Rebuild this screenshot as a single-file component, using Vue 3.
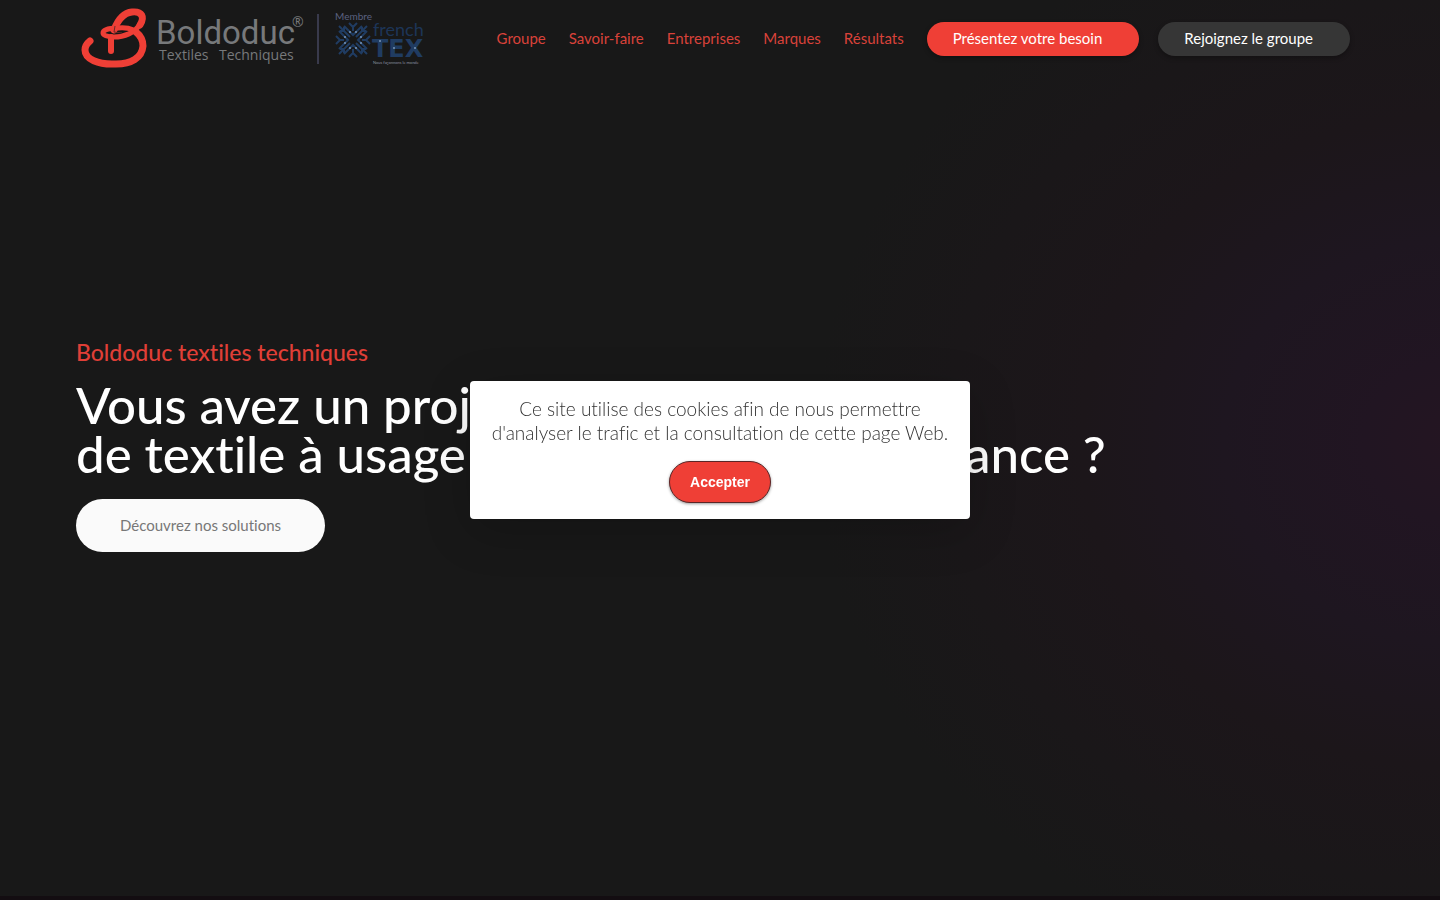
<template>
  <div class="page">
    <header class="header">
      <a class="brand" href="#" aria-label="Boldoduc Textiles Techniques">
        <svg class="logo" viewBox="0 0 360 78" width="360" height="78">
          <g fill="none" stroke="#ef3f36" stroke-linecap="round" stroke-linejoin="round">
            <path stroke-width="6" d="M35 51V37" />
            <path stroke-width="7" d="M38 30C41 22 46 13 56 12C66 11 69 17 64 25" />
            <path stroke-width="5" d="M64 24C59 33 48 37 38 37C31 37 27 35 27 33C27 30 33 28 42 28C52 27 60 30 64 36" />
            <path stroke-width="7" d="M60 32C65 36 67 41 67 46C66 58 55 64 40 64C22 65 9 59 9 50Q9 45 14 41" />
          </g>
          <path d="M39 26L38 32L46 33" fill="none" stroke="#6e2826" stroke-width="1" />
          <g class="logo-name">
            <text class="logo-title" x="80" y="44" font-size="33">Boldoduc</text>
            <text x="83" y="60" font-size="14">Textiles</text>
            <text x="143" y="60" font-size="14">Techniques</text>
            <text x="216" y="27" font-size="14">®</text>
          </g>
          <path d="M242 14V64" stroke="#5b5d80" />
          <g class="logo-member">
            <text x="259" y="20" font-size="10" fill="#5a6180">Membre</text>
            <text x="297" y="36" font-size="18" fill="#1d3557">french</text>
            <text class="logo-tex" x="296" y="57" font-size="24" fill="#203c62">TEX</text>
            <text x="297" y="64" font-size="4" fill="#8a92a0">Nous façonnons le monde</text>
          </g>
          <g fill="none" stroke="#203c62" stroke-width="2">
            <path v-for="angle in angles" :key="angle" :transform="`rotate(${angle} 277 40)`" d="M273 23L277 27L281 23M268 26L277 35L286 26M277 27V31M280 37L291 26M286 27V31H290" />
          </g>
          <g fill="#7896b8">
            <circle v-for="dot in dots" :key="dot.join()" :cx="dot[0]" :cy="dot[1]" r="1" />
          </g>
        </svg>
      </a>
      <nav class="nav">
        <a v-for="link in links" :key="link" class="nav-link" href="#">{{ link }}</a>
        <a class="pill pill-red" href="#">Présentez votre besoin</a>
        <a class="pill pill-grey" href="#">Rejoignez le groupe</a>
      </nav>
    </header>

    <main class="hero">
      <p class="subtitle">Boldoduc textiles techniques</p>
      <h1 class="title">Vous avez un projet<br>de textile à usage technique de performance ?</h1>
      <a class="discover" href="#">Découvrez nos solutions</a>
    </main>
    <div class="next-section"></div>

    <div v-if="cookiesOpen" class="overlay">
      <div class="cookies" role="dialog" aria-label="Cookies">
        <p class="cookies-text">Ce site utilise des cookies afin de nous permettre d'analyser le trafic et la consultation de cette page Web.</p>
        <button class="accept" type="button" @click="cookiesOpen = false">Accepter</button>
      </div>
    </div>
  </div>
</template>

<script setup>
import { ref } from "vue";

const cookiesOpen = ref(true);
const links = ["Groupe", "Savoir-faire", "Entreprises", "Marques", "Résultats"];

// branches and bright stitches of the frenchTEX snowflake
const angles = [0, 90, 180, 270];
const dots = [[274, 32], [280, 32], [269, 37], [285, 37], [269, 43], [285, 43], [274, 48], [280, 48], [304, 41], [318, 48], [339, 48]];
</script>

<style>
body {
  margin: 0;
  background: #181818;
}
</style>

<style scoped>
.page {
  min-height: 100vh;
  display: flex;
  flex-direction: column;
  background: radial-gradient(640px 560px at 101% 49%, #241522 0, #211522 14%, #1e1620 36%, #1c161a 58%, #181818 100%);
  font-family: Lato, "Open Sans", sans-serif;
  font-variant-ligatures: none;
}
a {
  text-decoration: none;
}
.header {
  display: flex;
  align-items: center;
  justify-content: space-between;
  height: 78px;
  padding: 0 90px 0 76px;
}
.brand,
.logo {
  display: block;
}
.logo-name {
  fill: #77797b;
  font-family: "Open Sans", sans-serif;
}
.logo-title {
  font-family: Roboto, sans-serif;
}
.logo-member {
  font-family: Lato, sans-serif;
}
.logo-tex {
  font-family: "DejaVu Sans", sans-serif;
  font-weight: bold;
}
.nav {
  display: flex;
  align-items: center;
}
.nav-link {
  height: 34px;
  margin-right: 23px;
  color: #d9423a;
  font-size: 15px;
  line-height: 32px;
}
.pill {
  box-sizing: border-box;
  height: 34px;
  padding: 0 37px 0 26px;
  border-radius: 17px;
  color: #fff;
  font-size: 15px;
  line-height: 32px;
  box-shadow: 0 2px 5px rgba(0, 0, 0, 0.3);
}
.pill-red {
  background: #ef3f36;
}
.pill-grey {
  margin-left: 19px;
  background: #363636;
}
.hero {
  flex: 1;
  display: flex;
  flex-direction: column;
  align-items: flex-start;
  justify-content: center;
  padding: 0 76px 84px;
}
.subtitle {
  margin: 0 0 14px;
  color: #e03f37;
  font-size: 23px;
  line-height: 28px;
  font-weight: 500;
}
.title {
  margin: 0 0 21px;
  color: #fff;
  font-size: 51px;
  line-height: 49px;
  font-weight: 500;
}
.discover {
  padding: 0 44px;
  border-radius: 27px;
  background: #fafafa;
  color: #777;
  font-size: 15px;
  line-height: 53px;
}
.next-section {
  height: 4px;
  background: #130d11;
}
.overlay {
  position: fixed;
  inset: 0;
  display: flex;
  align-items: center;
  justify-content: center;
}
.cookies {
  box-sizing: border-box;
  width: 500px;
  padding: 16px;
  border-radius: 4px;
  background: #fff;
  text-align: center;
  box-shadow: 0 12px 48px rgba(0, 0, 0, 0.2);
}
.cookies-text {
  margin: 0 0 16px;
  color: #333;
  font-size: 19px;
  line-height: 24px;
  font-weight: 300;
}
.accept {
  height: 42px;
  padding: 0 20px;
  border: 1px solid #5b2526;
  border-radius: 21px;
  background: #ef3f36;
  color: #fff;
  font: bold 14px "Liberation Sans", sans-serif;
  box-shadow: 0 1px 3px rgba(0, 0, 0, 0.4);
}
</style>
